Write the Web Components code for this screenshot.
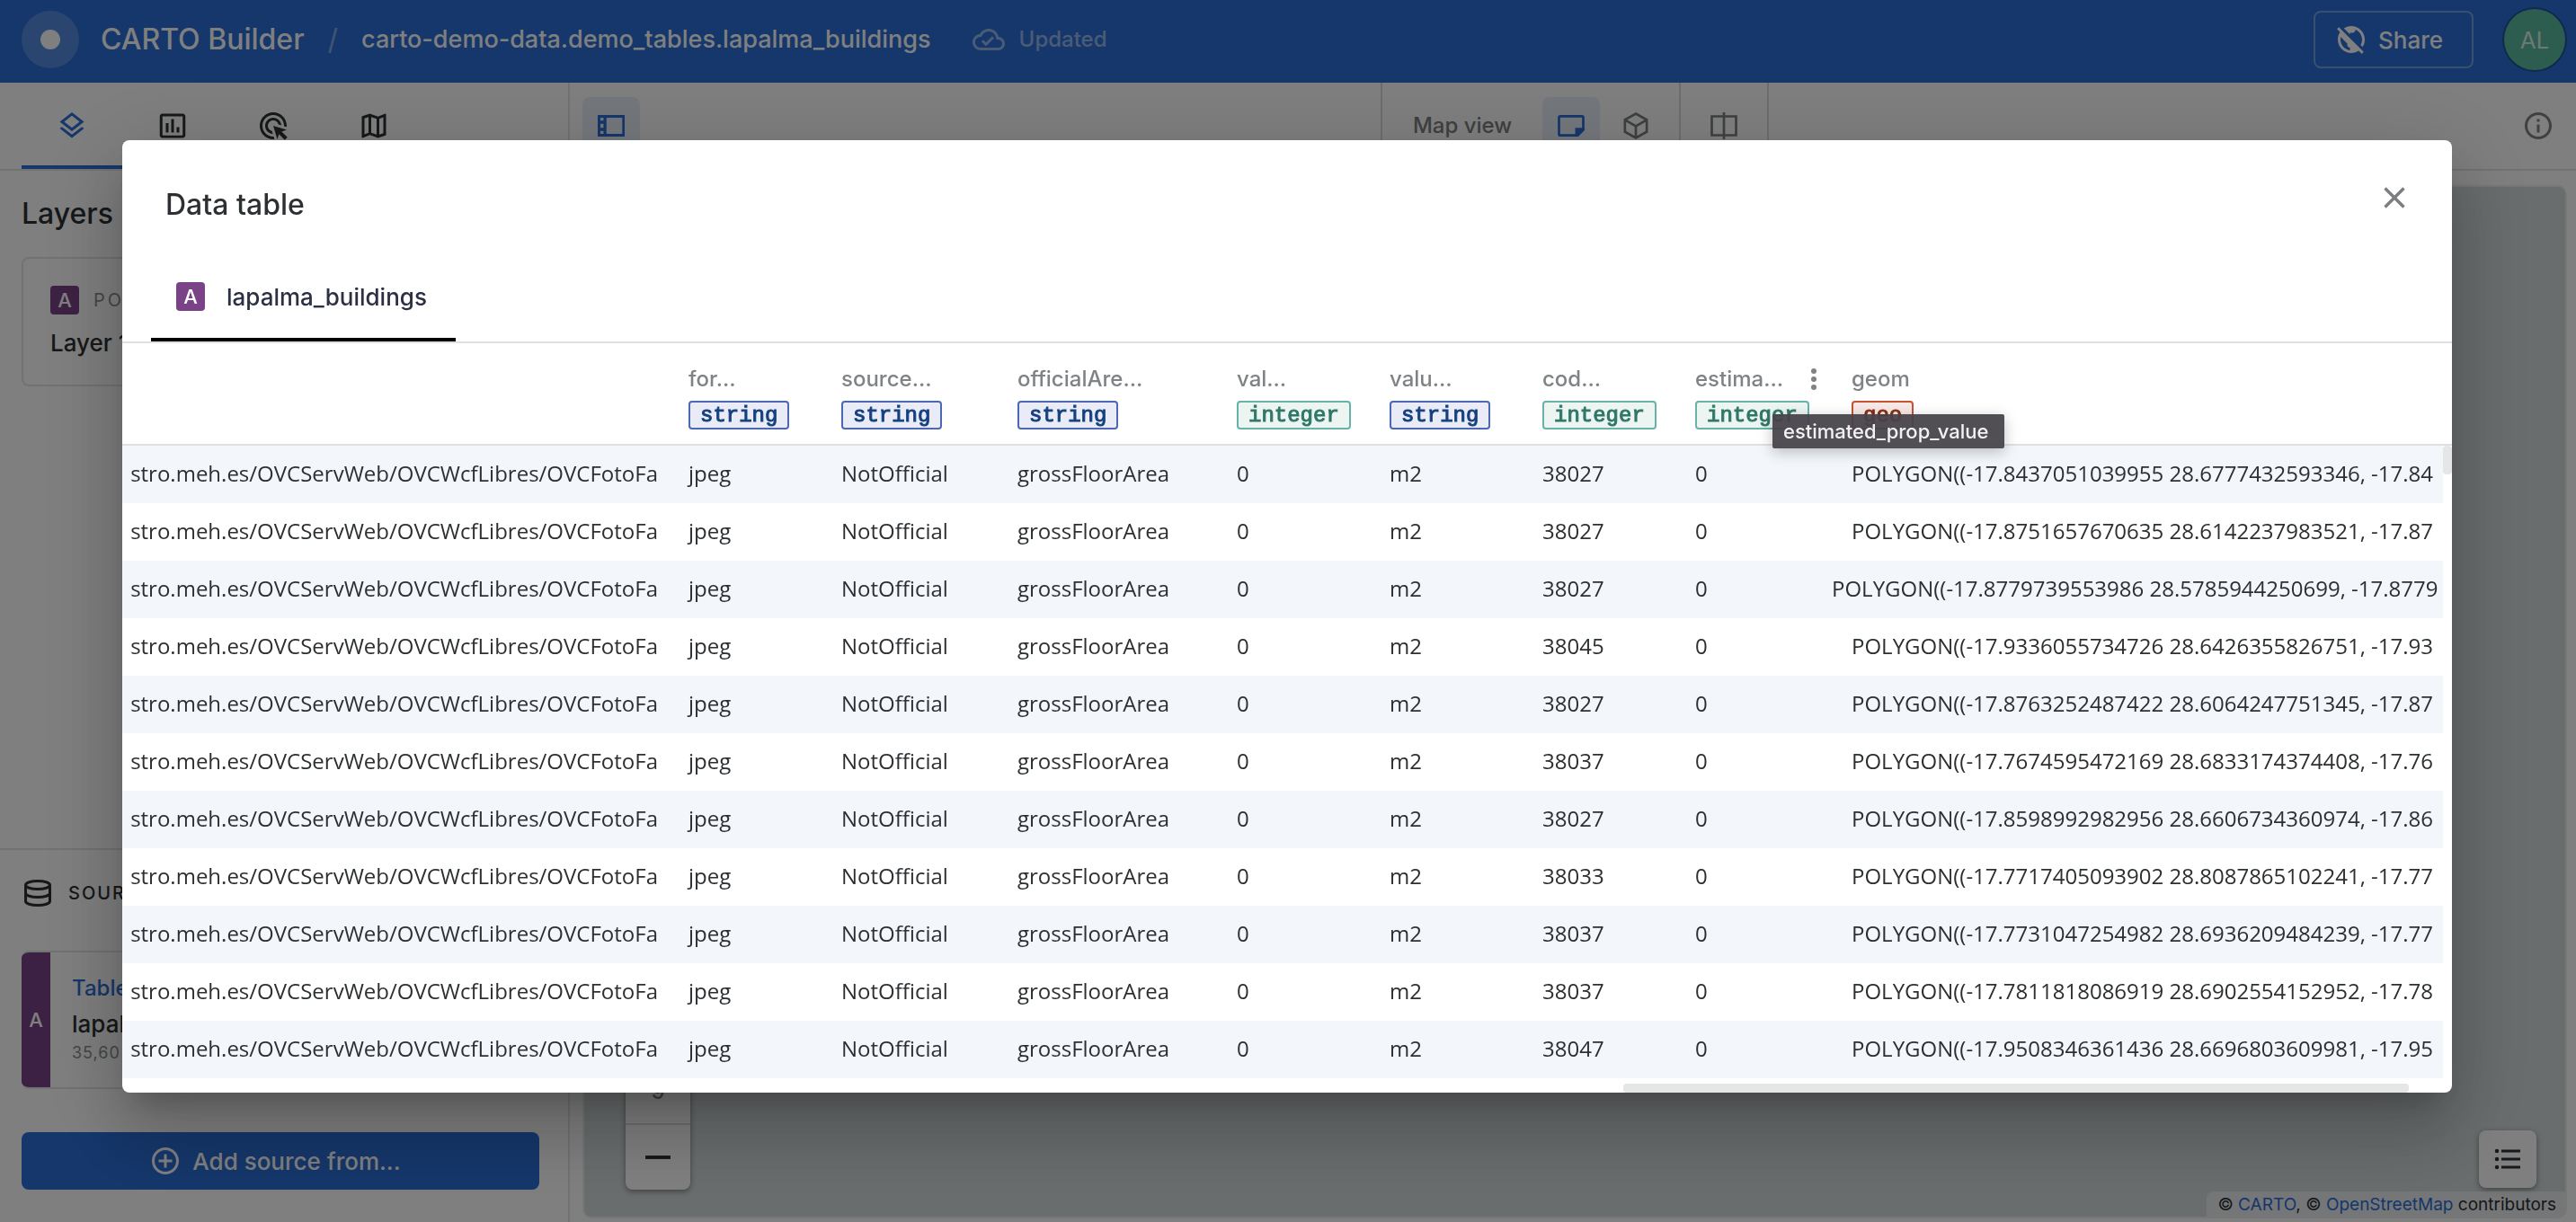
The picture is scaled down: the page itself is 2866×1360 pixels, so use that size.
<!DOCTYPE html>
<html lang="en">
<head>
<meta charset="utf-8">
<title>CARTO Builder</title>
<style>
  html, body { margin: 0; height: 100%; }
  body { font-family: Inter, "Liberation Sans", sans-serif; color: #2c3032; background: #fff; overflow: hidden; }
</style>
</head>
<body>
<builder-app></builder-app>

<script>
const define = (name, html, setup) => {
  const template = document.createElement('template');
  template.innerHTML = '<style>*{box-sizing:border-box}button{font:inherit;color:inherit;background:none;border:0;padding:0;margin:0;cursor:pointer}a{color:#2b6ed6;text-decoration:none}</style>' + html;
  customElements.define(name, class extends HTMLElement {
    constructor() {
      super();
      this.attachShadow({ mode: 'open' }).append(template.content.cloneNode(true));
    }
    connectedCallback() { if (setup) setup(this, this.shadowRoot); }
  });
};

const f = d => `<path fill="currentColor" d="${d}"/>`;
const s = (d, w = 2) => `<path fill="none" stroke="currentColor" stroke-width="${w}" d="${d}"/>`;
const ICONS = {
  layers: f('M11.99 18.54l-7.37-5.73L3 14.07l9 7 9-7-1.63-1.27zM12 16l7.36-5.73L21 9l-9-7-9 7 1.63 1.27L12 16zm0-11.47L17.74 9 12 13.47 6.26 9 12 4.53z'),
  chart: f('M9 17H7v-7h2v7zm4 0h-2V7h2v10zm4 0h-2v-4h2v4zm2.5 2.1h-15V5h15v14.1zm0-16.1h-15c-1.1 0-2 .9-2 2v14c0 1.1.9 2 2 2h15c1.1 0 2-.9 2-2V5c0-1.1-.9-2-2-2z'),
  click: f('M11.71 17.99C8.53 17.84 6 15.22 6 12c0-3.31 2.69-6 6-6 3.22 0 5.84 2.53 5.99 5.71l-2.1-.63C15.48 9.31 13.89 8 12 8c-2.21 0-4 1.79-4 4 0 1.89 1.31 3.48 3.08 3.89l.63 2.1zM22 12c0 .3-.01.6-.04.9l-1.97-.59c.01-.1.01-.21.01-.31 0-4.42-3.58-8-8-8s-8 3.58-8 8 3.58 8 8 8c.1 0 .21 0 .31-.01l.59 1.97c-.3.03-.6.04-.9.04-5.52 0-10-4.48-10-10S6.48 2 12 2s10 4.48 10 10zm-3.77 4.26L22 15l-10-3 3 10 1.26-3.77 4.27 4.27 1.98-1.98-4.28-4.26z'),
  map: f('M20.5 3l-.16.03L15 5.1 9 3 3.36 4.9c-.21.07-.36.25-.36.48V20.5c0 .28.22.5.5.5l.16-.03L9 18.9l6 2.1 5.64-1.9c.21-.07.36-.25.36-.48V3.5c0-.28-.22-.5-.5-.5zM10 5.47l4 1.4v11.66l-4-1.4V5.47zm-5 .99l3-1.01v11.7l-3 1.16V6.46zm14 11.08l-3 1.01V6.86l3-1.16v11.84z'),
  panel: '<path fill="currentColor" fill-rule="evenodd" d="M2 4h20v16H2zM8.500 6v12H20.200V6zM4 6v2.200h2.300V6zM4 10.500v3h2.300v-3zM4 15.800V18h2.300v-2.200z"/>',
  note: s('M3 5.900a1 1 0 0 1 1-1h16a1 1 0 0 1 1 1v9l-4.200 4.200H4a1 1 0 0 1-1-1z', 1.8) + f('M15 20v-6.500h7v1.600L17 20z'),
  cube: s('M12 3l8.100 4.600v8.800L12 21l-8.100-4.600V7.600zM3.900 7.600L12 12.300l8.100-4.700M12 12.300V21', 1.8),
  compare: s('M3 5h18v14H3zM12 2v20', 1.8),
  info: f('M11 7h2v2h-2zm0 4h2v6h-2zm1-9C6.480 2 2 6.480 2 12s4.480 10 10 10 10-4.480 10-10S17.520 2 12 2zm0 18c-4.410 0-8-3.590-8-8s3.590-8 8-8 8 3.590 8 8-3.590 8-8 8z'),
  cloud: f('M19.350 10.040C18.670 6.590 15.640 4 12 4 9.110 4 6.600 5.640 5.350 8.040 2.340 8.360 0 10.910 0 14c0 3.310 2.690 6 6 6h13c2.760 0 5-2.240 5-5 0-2.640-2.050-4.780-4.650-4.960zM19 18H6c-2.210 0-4-1.790-4-4 0-2.050 1.530-3.760 3.560-3.970l1.070-.11.5-.95C8.080 7.140 9.940 6 12 6c2.620 0 4.880 1.860 5.390 4.430l.3 1.500 1.530.11c1.560.1 2.780 1.410 2.780 2.960 0 1.650-1.350 3-3 3zm-9-3.820l-2.090-2.090L6.500 13.500 10 17l6.010-6.010-1.410-1.410z'),
  publicoff: f('M11 8.170L6.490 3.660C8.070 2.610 9.960 2 12 2c5.520 0 10 4.480 10 10 0 2.040-.61 3.930-1.660 5.510l-1.460-1.460C19.590 14.870 20 13.480 20 12c0-3.350-2.070-6.220-5-7.410V5c0 1.100-.9 2-2 2h-2v1.170zm10.190 13.020l-1.410 1.410-2.270-2.270C15.930 21.390 14.040 22 12 22 6.480 22 2 17.520 2 12c0-2.040.61-3.930 1.660-5.510L1.390 4.220 2.800 2.810l18.390 18.380zM11 18c-1.100 0-2-.9-2-2v-1l-4.790-4.790C4.080 10.790 4 11.380 4 12c0 4.080 3.050 7.440 7 7.930V18z'),
  database: s('M3 6c0-1.700 4-3 9-3s9 1.300 9 3-4 3-9 3-9-1.300-9-3zM3 6v12c0 1.700 4 3 9 3s9-1.300 9-3V6M3 12c0 1.700 4 3 9 3s9-1.300 9-3'),
  addcircle: f('M13 7h-2v4H7v2h4v4h2v-4h4v-2h-4V7zm-1-5C6.480 2 2 6.480 2 12s4.480 10 10 10 10-4.480 10-10S17.520 2 12 2zm0 18c-4.410 0-8-3.590-8-8s3.590-8 8-8 8 3.590 8 8-3.590 8-8 8z'),
  close: s('M5 5l14 14M19 5L5 19', 2.3),
  dots: '<g fill="currentColor"><circle cx="12" cy="6" r="2"/><circle cx="12" cy="12" r="2"/><circle cx="12" cy="18" r="2"/></g>',
  list: s('M7.300 6h14M7.300 12h14M7.300 18h14') + '<g fill="currentColor"><circle cx="4" cy="6" r="1.500"/><circle cx="4" cy="12" r="1.500"/><circle cx="4" cy="18" r="1.500"/></g>',
  minus: s('M2.700 12h18.600', 2.6),
  plus: s('M2.700 12h18.600M12 2.700v18.600', 2.6)
};

define('ui-icon', `
<style>:host{display:block;flex:none;width:36px;height:36px}svg{display:block;width:100%;height:100%}</style>
<svg viewBox="0 0 24 24" aria-hidden="true"></svg>`,
(host, root) => { root.querySelector('svg').innerHTML = ICONS[host.getAttribute('name')]; });

define('source-badge', `
<style>:host{display:grid;place-items:center;flex:none;width:32px;height:32px;border-radius:4px;background:#7a4388;color:#fff;font-size:22px;font-weight:500;line-height:32px;letter-spacing:normal}</style>
<slot></slot>`);

define('type-chip', `
<style>
:host{display:block;width:max-content;height:32px;padding:0 11px;border:2px solid #4b68b5;border-radius:4px;background:#e9ecf6;color:#15407f;font:400 24px/30px "Liberation Mono",monospace;-webkit-text-stroke:1px currentColor}
:host([kind=integer]){border-color:#67b3a9;background:#edf5f3;color:#2f7766}
:host([kind=geo]){border-color:#c75236;background:#f8e9e6;color:#8a2b14}
</style><slot></slot>`);

define('tool-button', `
<style>
:host{display:block;flex:none;color:#7c8082}
button{display:grid;place-items:center;width:64px;height:64px;border-radius:8px}
:host([active]){color:#2b6ed6}
:host([active]) button{background:rgba(43,110,214,.1)}
</style><button><slot></slot></button>`,
(host, root) => root.querySelector('button').setAttribute('aria-label', host.getAttribute('label')));

define('app-header', `
<style>
:host{display:flex;align-items:center;height:92px;padding:0 12px 4px 24px;background:#2b6ed6;color:#fff}
.logo{display:grid;place-items:center;flex:none;width:64px;height:64px;border-radius:50%;background:rgba(255,255,255,.2);margin-right:24px}
.logo::after{content:"";width:22px;height:22px;border-radius:50%;background:#fff}
h1{margin:0;font-size:32px;font-weight:500;line-height:40px}
.sep{margin:0 26px;font-size:32px;line-height:40px;opacity:.4}
.crumb{font-size:27px;font-weight:500;line-height:32px}
.status{display:flex;align-items:center;gap:16px;margin-left:46px;font-size:24px;font-weight:500;line-height:32px;opacity:.5}
.share{display:flex;align-items:center;gap:12px;margin-left:auto;height:64px;padding:0 32px 0 22px;border:2px solid rgba(255,255,255,.35);border-radius:8px;font-size:26px;font-weight:500}
.avatar{display:grid;place-items:center;width:68px;height:68px;margin-left:34px;border-radius:50%;background:#58bb9c;box-shadow:0 0 0 2px #20539f;font-size:26px;color:rgba(255,255,255,.8)}
</style>
<div class="logo"></div><h1>CARTO Builder</h1><span class="sep">/</span>
<span class="crumb">carto-demo-data.demo_tables.lapalma_buildings</span>
<div class="status"><ui-icon name="cloud"></ui-icon><span>Updated</span></div>
<button class="share"><ui-icon name="publicoff"></ui-icon>Share</button>
<button class="avatar">AL</button>`);

define('side-panel', `
<style>
:host{display:flex;flex-direction:column;border-right:2px solid #e2e4e5}
nav{display:flex;height:98px;padding:0 24px;border-bottom:2px solid #e2e4e5}
nav button{display:grid;place-items:center;width:112px;border-bottom:4px solid transparent;padding-top:4px}
nav button.on{color:#2b6ed6;border-color:#2b6ed6}
h2{margin:0;padding:28px 24px;font-size:32px;font-weight:500;line-height:40px}
.layer{margin:0 32px 0 24px;height:144px;padding:30px;border:2px solid #e2e4e5;border-radius:8px}
.kind{display:flex;align-items:center;gap:16px;margin-bottom:16px;color:#8a8e90;font-size:20px;letter-spacing:3px}
.name{font-size:26px;font-weight:500;line-height:32px}
section{margin-top:auto;border-top:2px solid #e2e4e5;padding:0 32px 36px 24px}
h3{display:flex;align-items:center;gap:16px;height:96px;margin:0 0 16px;font-size:20px;font-weight:500;letter-spacing:2px}
.source{display:flex;border:2px solid #e2e4e5;border-left-width:0;border-radius:8px;height:154px;overflow:hidden;margin-bottom:48px}
.strip{display:grid;place-items:center;width:32px;background:#7a4388;color:#fff;font-size:22px;font-weight:500}
.info{padding:24px}
.info a{display:block;font-size:24px;font-weight:500;line-height:32px;margin-bottom:8px}
.rows{margin-top:4px;font-size:18px;line-height:24px;letter-spacing:1px;color:#8a8e90}
.add{display:flex;align-items:center;justify-content:center;gap:12px;width:100%;height:64px;padding-right:12px;border-radius:8px;background:#2b6ed6;color:#fff;font-size:26px;font-weight:500}
</style>
<nav>
<button class="on" aria-label="Layers"><ui-icon name="layers"></ui-icon></button>
<button aria-label="Widgets"><ui-icon name="chart"></ui-icon></button>
<button aria-label="Interactions"><ui-icon name="click"></ui-icon></button>
<button aria-label="Basemap"><ui-icon name="map"></ui-icon></button>
</nav>
<h2>Layers</h2>
<div class="layer"><div class="kind"><source-badge>A</source-badge>POLYGON</div><div class="name">Layer 1</div></div>
<section>
<h3><ui-icon name="database"></ui-icon>SOURCES</h3>
<div class="source"><div class="strip">A</div><div class="info"><a href="#table">Table</a><div class="name">lapalma_buildings</div><div class="rows">35,60</div></div></div>
<button class="add"><ui-icon name="addcircle"></ui-icon>Add source from...</button>
</section>`);

define('map-toolbar', `
<style>
:host{display:grid;grid-template-columns:1fr auto 1fr;height:98px;border-bottom:2px solid #e2e4e5;color:#7c8082}
div{display:flex;align-items:center}
.left{padding-left:14px}.mid{padding-left:4px}.right{justify-content:flex-end;padding-right:24px}
.group{gap:8px;height:100%;padding:0 16px;border-left:2px solid #d9dcdd}
.group.last{border-right:2px solid #d9dcdd}
span{font-size:24px;font-weight:500;line-height:32px;padding:0 26px 0 18px}
</style>
<div class="left"><tool-button active label="Toggle panel"><ui-icon name="panel"></ui-icon></tool-button></div>
<div class="mid"><div class="group"><span>Map view</span><tool-button active label="2D view"><ui-icon name="note"></ui-icon></tool-button><tool-button label="3D view"><ui-icon name="cube"></ui-icon></tool-button></div>
<div class="group last"><tool-button label="Dual map"><ui-icon name="compare"></ui-icon></tool-button></div></div>
<div class="right"><button aria-label="Information"><ui-icon name="info"></ui-icon></button></div>`);

define('map-canvas', `
<style>
:host{display:flex;align-items:flex-end;justify-content:space-between;position:relative;margin:18px 12px 6px 16px;padding:0 32px 30px 46px;border-radius:8px;background:#d4dadc;box-shadow:0 0 0 2px #eceeef}
.zoom{width:72px;border-radius:8px;background:#fff;box-shadow:0 2px 6px rgba(0,0,0,.4);font-size:24px;font-weight:500;color:#7c8082}
.zoom>*{display:grid;place-items:center;width:100%;height:72px}
.zoom>*+*{border-top:2px solid #d9dcdd;height:74px}
.zoom button{color:#2c3032}
.legend{display:grid;place-items:center;width:64px;height:64px;margin-bottom:2px;border-radius:8px;background:#fff;box-shadow:0 2px 6px rgba(0,0,0,.4)}
.credit{position:absolute;right:0;bottom:0;padding:2px 10px 0 12px;border-radius:8px 0 8px 0;background:rgba(255,255,255,.5);font-size:19px;line-height:26px}
</style>
<div class="zoom"><button aria-label="Zoom in"><ui-icon name="plus"></ui-icon></button><span>9</span><button aria-label="Zoom out"><ui-icon name="minus"></ui-icon></button></div>
<button class="legend" aria-label="Legend"><ui-icon name="list"></ui-icon></button>
<div class="credit">© <a href="#carto">CARTO</a>, © <a href="#osm">OpenStreetMap</a> contributors</div>`);

define('tool-tip', `
<style>:host{display:block;position:absolute;z-index:2;padding:0 18px 0 12px;border-radius:2px;background:rgba(70,67,73,.94);color:#f2f2f2;font:500 22px/38px Inter,sans-serif;white-space:nowrap;box-shadow:0 4px 16px rgba(0,0,0,.25)}</style><slot></slot>`);

const COLUMNS = [['for…', 'string', 170], ['source…', 'string', 196], ['officialAre…', 'string', 244], ['val…', 'integer', 170], ['valu…', 'string', 170], ['cod…', 'integer', 170], ['estima…', 'integer', 174], ['geom', 'geo', 0]];
const ROWS = [
  ['38027', '-17.8437051039955 28.6777432593346, -17.84'],
  ['38027', '-17.8751657670635 28.6142237983521, -17.87'],
  ['38027', '-17.8779739553986 28.5785944250699, -17.8779'],
  ['38045', '-17.9336055734726 28.6426355826751, -17.93'],
  ['38027', '-17.8763252487422 28.6064247751345, -17.87'],
  ['38037', '-17.7674595472169 28.6833174374408, -17.76'],
  ['38027', '-17.8598992982956 28.6606734360974, -17.86'],
  ['38033', '-17.7717405093902 28.8087865102241, -17.77'],
  ['38037', '-17.7731047254982 28.6936209484239, -17.77'],
  ['38037', '-17.7811818086919 28.6902554152952, -17.78'],
  ['38047', '-17.9508346361436 28.6696803609981, -17.95']
];

define('data-grid', `
<style>
:host{display:block;position:relative;padding-bottom:16px}
table{width:100%;table-layout:fixed;border-collapse:separate;border-spacing:0}
th{position:relative;height:114px;padding:28px 0 16px 16px;border-bottom:2px solid #e0e0e0;text-align:left;vertical-align:top;font-weight:500}
.head{display:flex;align-items:center;height:24px;margin-bottom:12px;font-size:24px;line-height:24px;color:#808385}
.head span{white-space:nowrap}
.head button{margin:0 8px 0 auto}
tool-tip{left:102px;top:79px}
td{height:64px;padding:0 0 2px 16px;font:400 24px/32px "Open Sans",sans-serif;white-space:nowrap;overflow:hidden}
td:first-child{padding:0 18px 2px 0}
td:first-child div{display:flex;justify-content:flex-end;overflow:hidden}
tr:nth-child(odd) td:not(.gutter){background:#f3f7fc}
td.long{overflow:visible;padding:0 0 2px}
td.long div{margin-left:-6px;overflow:hidden}
.bar{position:absolute;border-radius:4px;background:#e5e7e6}
.v{right:0;top:114px;width:10px;height:32px}
.h{right:48px;bottom:0;width:calc(100% / 3 + 10px);height:10px}
</style>
<table><colgroup></colgroup><thead><tr></tr></thead><tbody></tbody></table>
<div class="bar v"></div><div class="bar h"></div>`,
(host, root) => {
  root.querySelector('colgroup').innerHTML = '<col style="width:614px">' + COLUMNS.map(c => c[2] ? `<col style="width:${c[2]}px">` : '<col>').join('') + '<col style="width:10px">';
  root.querySelector('thead tr').innerHTML = '<th></th>' + COLUMNS.map(([name, kind]) => {
    const hovered = name === 'estima…';
    return `<th><div class="head"><span>${name}</span>${hovered ? '<button aria-label="Column options"><ui-icon name="dots"></ui-icon></button>' : ''}</div><type-chip kind="${kind}">${kind}</type-chip>${hovered ? '<tool-tip>estimated_prop_value</tool-tip>' : ''}</th>`;
  }).join('') + '<th></th>';
  root.querySelector('tbody').innerHTML = ROWS.map(([code, geom]) => {
    const long = geom.endsWith('7.8779') ? ' class="long"' : '';
    return `<tr><td><div>stro.meh.es/OVCServWeb/OVCWcfLibres/OVCFotoFa</div></td><td>jpeg</td><td>NotOfficial</td><td>grossFloorArea</td><td>0</td><td>m2</td><td>${code}</td><td>0</td><td${long}><div>POLYGON((${geom}</div></td><td class="gutter"></td></tr>`;
  }).join('');
});

define('data-dialog', `
<style>
:host{position:fixed;inset:0;padding:156px 138px 144px 136px;background:rgba(0,0,0,.5)}
.paper{background:#fff;border-radius:8px;overflow:hidden;box-shadow:0 22px 30px -14px rgba(0,0,0,.2),0 48px 76px 6px rgba(0,0,0,.14),0 18px 92px 16px rgba(0,0,0,.12)}
header{display:flex;justify-content:space-between;align-items:flex-start;height:128px;padding:40px 40px 0 48px}
h2{margin:0;padding-top:8px;font-size:32px;font-weight:500;line-height:48px}
.close{display:grid;place-items:center;width:48px;height:48px;color:#7c7f81}
.tabs{display:flex;padding:0 32px;height:98px;border-bottom:2px solid #e0e0e0}
.tab{display:flex;align-items:center;gap:24px;padding:0 32px 0 28px;border-bottom:4px solid #000;font-size:26px;font-weight:500;color:#2c3042}
</style>
<div class="paper" role="dialog" aria-label="Data table">
<header><h2>Data table</h2><button class="close" aria-label="Close"><ui-icon name="close"></ui-icon></button></header>
<div class="tabs"><button class="tab"><source-badge>A</source-badge>lapalma_buildings</button></div>
<data-grid></data-grid>
</div>`);

define('builder-app', `
<style>
:host{display:grid;grid-template:auto 1fr / 634px 1fr;height:100vh}
app-header{grid-column:1 / -1}
main{display:grid;grid-template-rows:auto 1fr;min-width:0}
</style>
<app-header></app-header>
<side-panel></side-panel>
<main><map-toolbar></map-toolbar><map-canvas></map-canvas></main>
<data-dialog></data-dialog>`);
</script>
</body>
</html>
